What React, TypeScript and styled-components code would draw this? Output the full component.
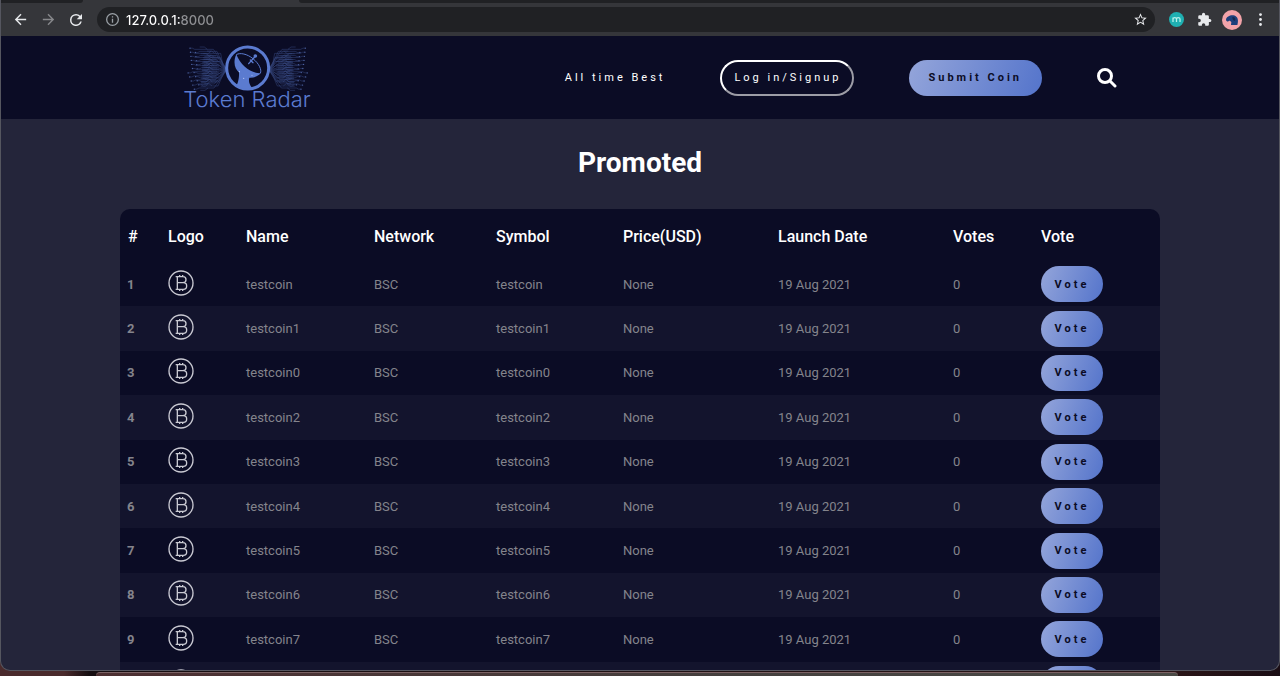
import React from "react";
import styled, { createGlobalStyle, css } from "styled-components";

const GlobalStyle = createGlobalStyle`
  *, *::before, *::after { box-sizing: border-box; }
  body {
    margin: 0;
    background: #1c1316;
    font-family: Roboto, "Liberation Sans", sans-serif;
  }
`;

const Desktop = styled.div`
  height: 100vh;
  display: flex;
  flex-direction: column;
  overflow: hidden;
  background: linear-gradient(90deg, #4a2a2c 0, #4a2a2c 5%, #150d10 7%, #2a1517 92%, #1a0d14 100%);
`;

const BrowserWindow = styled.div`
  flex: 1;
  min-height: 0;
  display: flex;
  flex-direction: column;
  overflow: hidden;
  border: 1px solid #55565f;
  border-top: 0;
  border-radius: 0 0 10px 10px;
  background: #24253a;
`;

const RearWindow = styled.div`
  flex: none;
  height: 4px;
  margin: 1px 8% 0 96px;
  border-top: 1px solid #7b6264;
  border-radius: 10px 10px 0 0;
  background: linear-gradient(90deg, #4d2f31, #45403e 60%, #4a4a46);
`;

const TabStrip = styled.div`
  flex: none;
  height: 4px;
  display: flex;
  background: #35363a;
`;

const IdleTabs = styled.div<{ $side: "left" | "right" }>`
  ${(p) =>
    p.$side === "left"
      ? css`
          width: 82px;
          border-radius: 0 0 6px 0;
        `
      : css`
          flex: 1;
          margin-left: 216px;
          border-radius: 0 0 0 6px;
        `}
  height: 3px;
  background: #202124;
`;

const Toolbar = styled.div`
  flex: none;
  height: 32px;
  display: flex;
  align-items: center;
  padding: 0 5px 1px;
  background: #35363a;
`;

const ToolButton = styled.button<{ $dim?: boolean }>`
  flex: none;
  width: 28px;
  height: 28px;
  padding: 0;
  border: 0;
  background: none;
  display: flex;
  align-items: center;
  justify-content: center;
  color: ${(p) => (p.$dim ? "#87888b" : "#e8eaed")};
`;

const ToolGroup = styled.div`
  display: flex;
  align-items: center;
`;

const AddressBar = styled.div`
  flex: 1;
  height: 25px;
  display: flex;
  align-items: center;
  gap: 7px;
  margin: 0 7px;
  padding: 0 1px 0 9px;
  border-radius: 13px;
  background: #202124;
  color: #9aa0a6;
`;

const AddressInput = styled.input`
  flex: 1;
  min-width: 0;
  height: 20px;
  padding: 0;
  border: 0;
  outline: 0;
  font: 500 13px Inter, "Liberation Sans", sans-serif;
  background: linear-gradient(90deg, #ffffff 55px, #8f9093 55px);
  background-clip: text;
  -webkit-background-clip: text;
  color: transparent;
`;

const Page = styled.div`
  flex: 1;
  min-height: 0;
  overflow: hidden;
`;

const SiteHeader = styled.header`
  height: 83px;
  display: flex;
  justify-content: center;
  background: #0b0c25;
`;

const HeaderInner = styled.div`
  flex: 1;
  max-width: 1040px;
  display: flex;
  align-items: center;
  justify-content: space-between;
  padding: 0 43px 0 63px;
`;

const Brand = styled.a`
  display: flex;
  flex-direction: column;
  align-items: center;
  padding-bottom: 4px;
  color: #5b7bd0;
  text-decoration: none;
  font: 300 22px/16px Inter, "Liberation Sans", sans-serif;
  white-space: nowrap;
`;

const Nav = styled.nav`
  display: flex;
  align-items: center;
  gap: 55px;
`;

const spaced = css`
  font-family: Roboto, "Liberation Sans", sans-serif;
  font-size: 11px;
  letter-spacing: 3px;
  white-space: nowrap;
`;

const NavLink = styled.a`
  ${spaced}
  color: #ffffff;
  text-decoration: none;
`;

const OutlineButton = styled.button`
  ${spaced}
  height: 36px;
  padding: 0 10px 0 12px;
  border: 2px solid;
  border-color: #ffffff #9d9da6 #9d9da6 #ffffff;
  border-radius: 18px;
  background: transparent;
  color: #ffffff;
`;

const GradientButton = styled.button<{ $wide?: boolean }>`
  ${spaced}
  display: block;
  min-width: 62px;
  height: 36px;
  padding: 0 ${(p) => (p.$wide ? 20 : 13)}px;
  border: 0;
  border-radius: 18px;
  background: linear-gradient(110deg, #94a5da, #5474cb);
  font-weight: 700;
  color: #0b0c25;
`;

const SearchButton = styled.button`
  width: 20px;
  height: 20px;
  padding: 0;
  border: 0;
  background: none;
  color: #ffffff;
`;

const Content = styled.main`
  max-width: 1040px;
  margin: 0 auto;
`;

const Title = styled.h1`
  margin: 0;
  padding: 27px 0 29px;
  font-size: 28px;
  line-height: 34px;
  font-weight: 700;
  color: #ffffff;
  text-align: center;
`;

const CoinTable = styled.table`
  width: 100%;
  height: 497px;
  table-layout: fixed;
  border-collapse: separate;
  border-spacing: 0;
  border-radius: 10px;
  overflow: hidden;
  background: #0b0c25;
  text-align: left;
  font-size: 13px;
  color: #84848c;
`;

const HeadCell = styled.th`
  height: 53px;
  padding: 1px 8px 0;
  font-size: 16px;
  font-weight: 500;
  color: #ffffff;
`;

const CoinRow = styled.tr`
  &:nth-child(even) {
    background: #13142d;
  }
`;

const Cell = styled.td`
  padding: 0 8px;
`;

const RankCell = styled.th`
  padding: 0 7px;
  font-weight: 700;
`;

const CoinMark = styled.svg`
  display: block;
  width: 26px;
  height: 26px;
  margin-bottom: 3px;
  color: #c9c9d2;
`;

const columns: [string, number][] = [
  ["#", 40],
  ["Logo", 78],
  ["Name", 128],
  ["Network", 122],
  ["Symbol", 127],
  ["Price(USD)", 155],
  ["Launch Date", 175],
  ["Votes", 88],
  ["Vote", 127],
];

const coins = ["testcoin", "testcoin1", "testcoin0", "testcoin2", "testcoin3", "testcoin4", "testcoin5", "testcoin6", "testcoin7"];

/* Circuit traces fanning out to the left of the dish; mirrored for the right side. */
const traces = Array.from({ length: 20 }, (_, i) => {
  const t = (i - 9.5) / 9.5;
  const y = 95 + t * 58;
  const far = 52 + ((i * 17) % 31) + Math.abs(t) * 8;
  const bend = 118 + ((i * 11) % 23);
  const near = 97 + t * 20;
  const tick = i % 2 ? 7 : -7;
  return {
    d: `M170 97L158 ${near}L${bend + 12} ${y}H${far + 14}l-7 ${tick / 2}H${far} M${bend - 6} ${y}l-9 ${tick}h-14 M${(bend + 158) / 2} ${(near + y) / 2}h-20l-10 ${tick}h-16`,
    far,
    y: y + tick / 2,
  };
});

const Fan = () => (
  <g fill="none" stroke="#4d68ae" strokeWidth="1.4" opacity="0.7">
    {traces.map((t, i) => (
      <g key={i}>
        <path d={t.d} />
        <circle cx={t.far} cy={t.y} r="2" fill="#6a88d8" stroke="none" />
      </g>
    ))}
  </g>
);

const RadarLogo = () => (
  <svg width="128" height="46" viewBox="39 24 384 138" aria-hidden="true">
    <Fan />
    <g transform="translate(466 0) scale(-1 1)">
      <Fan />
    </g>
    <circle cx="233" cy="93" r="63" fill="#0b0c25" stroke="#5b7bd0" strokeWidth="9" />
    <path
      d="M199 52C188 76 195 96 207 106C208 124 203 141 198 148Q220 160 246 152C238 143 235 132 238 122C252 123 266 117 272 109C246 110 212 88 199 52Z"
      fill="#5b7bd0"
    />
    <path d="M199 53C210 46 232 51 249 65C267 80 276 98 271 109" fill="none" stroke="#5b7bd0" strokeWidth="3" />
    <path d="M236 80L254 60M241 69l8 8" stroke="#5b7bd0" strokeWidth="4" strokeLinecap="round" />
    <circle cx="256" cy="57" r="5.5" fill="#5b7bd0" />
    <circle cx="208" cy="104" r="2" fill="#b9c8f4" />
    <circle cx="221" cy="124" r="2" fill="#b9c8f4" />
    <circle cx="246" cy="115" r="1.5" fill="#b9c8f4" />
  </svg>
);

const BitcoinIcon = () => (
  <CoinMark viewBox="0 0 78 78" fill="none" stroke="currentColor" strokeWidth="4" aria-label="coin logo">
    <circle cx="39" cy="39" r="36" />
    <path d="M23 20H45a9 9 0 0 1 0 18H29M45 38h1a10 10 0 0 1 0 20H23M28 20V58M35 15V20M44 15V20M35 58V63M44 58V63" />
  </CoinMark>
);

const App = () => (
  <>
    <GlobalStyle />
    <Desktop>
      <BrowserWindow>
        <TabStrip>
          <IdleTabs $side="left" />
          <IdleTabs $side="right" />
        </TabStrip>
        <Toolbar>
          <ToolGroup>
            <ToolButton aria-label="Back">
              <svg width="17" height="17" viewBox="0 0 24 24" fill="currentColor">
                <path d="M20 11H7.830l5.590-5.590L12 4l-8 8 8 8 1.410-1.410L7.830 13H20v-2z" />
              </svg>
            </ToolButton>
            <ToolButton aria-label="Forward" $dim>
              <svg width="17" height="17" viewBox="0 0 24 24" fill="currentColor">
                <path d="M12 4l-1.410 1.410L16.170 11H4v2h12.170l-5.580 5.590L12 20l8-8z" />
              </svg>
            </ToolButton>
            <ToolButton aria-label="Reload">
              <svg width="18" height="18" viewBox="0 0 24 24" fill="currentColor">
                <path d="M17.650 6.350A7.958 7.958 0 0 0 12 4a8 8 0 1 0 7.730 10h-2.080A6 6 0 1 1 12 6c1.660 0 3.140.69 4.220 1.780L13 11h7V4l-2.350 2.350z" />
              </svg>
            </ToolButton>
          </ToolGroup>
          <AddressBar>
            <svg width="13" height="13" viewBox="2 2 20 20" fill="currentColor" aria-hidden="true">
              <path d="M11 7h2v2h-2zm0 4h2v6h-2zm1-9a10 10 0 1 0 0 20 10 10 0 0 0 0-20zm0 18a8 8 0 1 1 0-16 8 8 0 0 1 0 16z" />
            </svg>
            <AddressInput aria-label="Address" defaultValue="127.0.0.1:8000" />
            <ToolButton aria-label="Bookmark">
              <svg width="15" height="15" viewBox="0 0 24 24" fill="currentColor">
                <path d="M22 9.240l-7.190-.62L12 2 9.190 8.630 2 9.240l5.460 4.730L5.820 21 12 17.270 18.180 21l-1.630-7.030L22 9.240zM12 15.400l-3.760 2.270 1-4.280-3.320-2.880 4.380-.38L12 6.100l1.710 4.040 4.380.38-3.320 2.880 1 4.280L12 15.400z" />
              </svg>
            </ToolButton>
          </AddressBar>
          <ToolGroup>
            <ToolButton aria-label="Extension">
              <svg width="15" height="15" viewBox="0 0 30 30">
                <circle cx="15" cy="15" r="15" fill="#1fb0b2" />
                <path d="M8 20v-9M8 14c0-4 7-4 7 0v6M15 14c0-4 7-4 7 0v6" fill="none" stroke="#b9f2ee" strokeWidth="2.500" />
              </svg>
            </ToolButton>
            <ToolButton aria-label="Extensions">
              <svg width="15" height="15" viewBox="0 0 24 24" fill="currentColor">
                <path d="M20.500 11H19V7a2 2 0 0 0-2-2h-4V3.500a2.500 2.500 0 0 0-5 0V5H4a2 2 0 0 0-2 2v3.800h1.500a2.700 2.700 0 0 1 0 5.400H2V20c0 1.100.9 2 2 2h3.800v-1.500a2.700 2.700 0 0 1 5.400 0V22H17a2 2 0 0 0 2-2v-4h1.500a2.500 2.500 0 0 0 0-5z" />
              </svg>
            </ToolButton>
            <ToolButton aria-label="Profile">
              <svg width="20" height="20" viewBox="0 0 60 60">
                <circle cx="30" cy="30" r="30" fill="#f2a3a9" />
                <path d="M12 29C14 16 34 12 43 20C50 26 48 38 46 45H27L28 36C24 33 22 31 20 34C16 35 12 33 12 29Z" fill="#1d3f7c" />
                <path d="M31 21C38 20 42 26 39 32C35 34 31 29 31 21Z" fill="#14264f" />
              </svg>
            </ToolButton>
            <ToolButton aria-label="Menu">
              <svg width="17" height="17" viewBox="0 0 24 24" fill="currentColor">
                <circle cx="12" cy="5" r="2" />
                <circle cx="12" cy="12" r="2" />
                <circle cx="12" cy="19" r="2" />
              </svg>
            </ToolButton>
          </ToolGroup>
        </Toolbar>
        <Page>
          <SiteHeader>
            <HeaderInner>
              <Brand href="#">
                <RadarLogo />
                Token Radar
              </Brand>
              <Nav>
                <NavLink href="#best">All time Best</NavLink>
                <OutlineButton>Log in/Signup</OutlineButton>
                <GradientButton $wide>Submit Coin</GradientButton>
                <SearchButton aria-label="Search">
                  <svg width="20" height="20" viewBox="0 0 20 20" fill="none" stroke="currentColor" strokeWidth="3">
                    <circle cx="8" cy="8" r="6.500" />
                    <path d="M13 13L18 18" strokeLinecap="round" />
                  </svg>
                </SearchButton>
              </Nav>
            </HeaderInner>
          </SiteHeader>
          <Content>
            <Title>Promoted</Title>
            <CoinTable>
              <colgroup>
                {columns.map(([name, width]) => (
                  <col key={name} width={width} />
                ))}
              </colgroup>
              <thead>
                <tr>
                  {columns.map(([name]) => (
                    <HeadCell key={name} scope="col">
                      {name}
                    </HeadCell>
                  ))}
                </tr>
              </thead>
              <tbody>
                {coins.map((coin, i) => (
                  <CoinRow key={coin}>
                    <RankCell scope="row">{i + 1}</RankCell>
                    <Cell>
                      <BitcoinIcon />
                    </Cell>
                    <Cell>{coin}</Cell>
                    <Cell>BSC</Cell>
                    <Cell>{coin}</Cell>
                    <Cell>None</Cell>
                    <Cell>19 Aug 2021</Cell>
                    <Cell>0</Cell>
                    <Cell>
                      <GradientButton>Vote</GradientButton>
                    </Cell>
                  </CoinRow>
                ))}
                {/* Placeholder for the next coin, below the fold. */}
                <CoinRow>
                  <Cell />
                  <Cell>
                    <BitcoinIcon />
                  </Cell>
                  <Cell colSpan={6} />
                  <Cell>
                    <GradientButton aria-label="Vote" />
                  </Cell>
                </CoinRow>
              </tbody>
            </CoinTable>
          </Content>
        </Page>
      </BrowserWindow>
      <RearWindow />
    </Desktop>
  </>
);

export default App;
